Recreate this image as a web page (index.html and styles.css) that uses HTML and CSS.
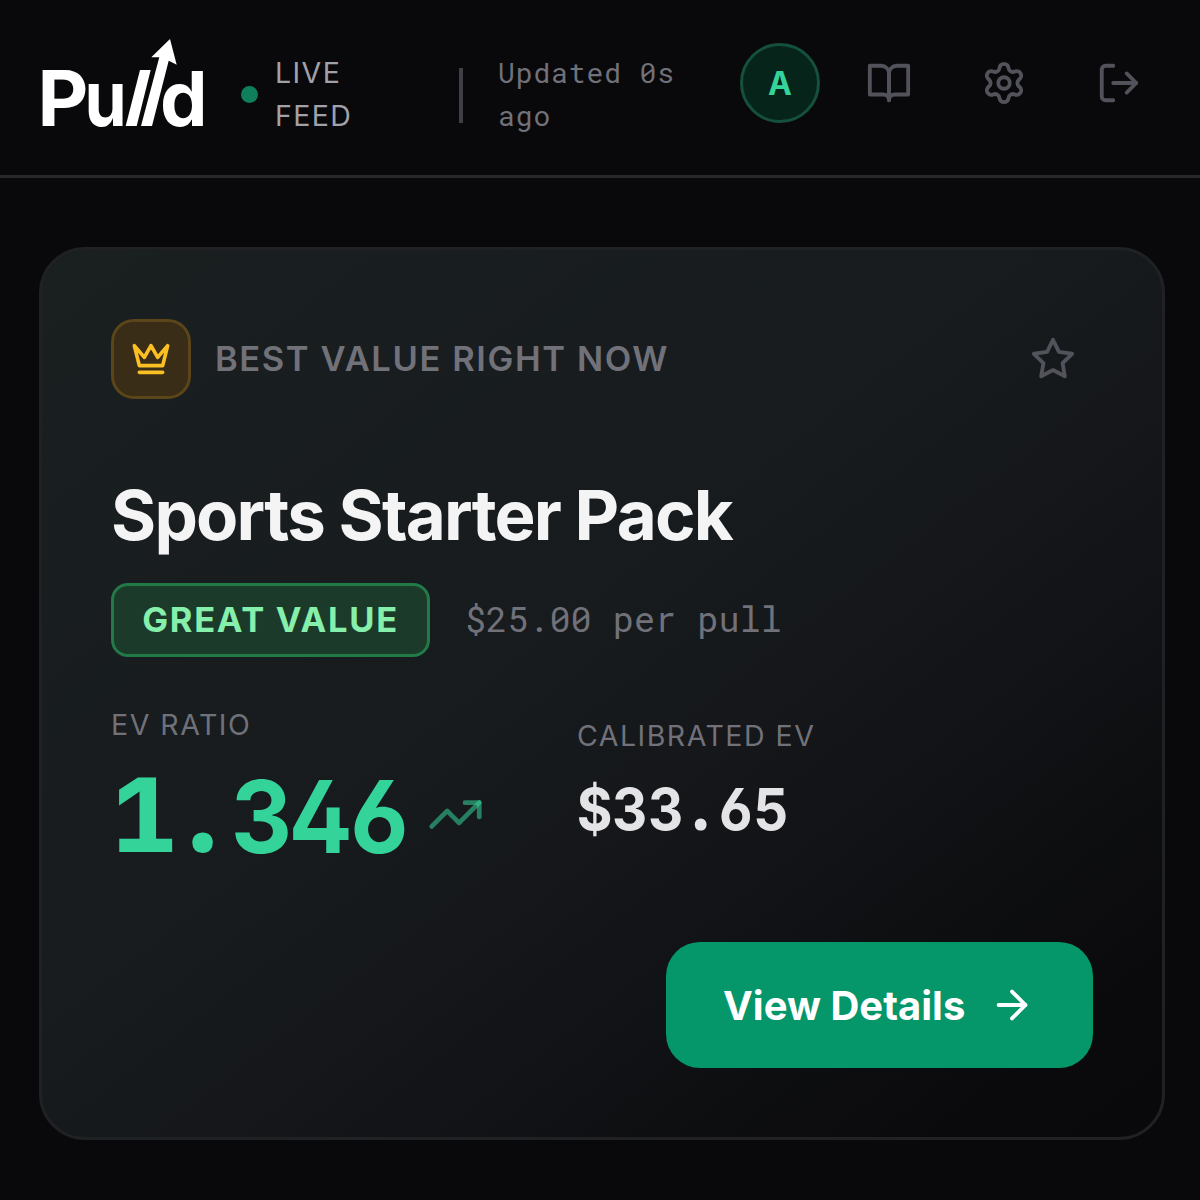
FILE: index.html
```html
<!DOCTYPE html>
<html lang="en">
<head>
<meta charset="utf-8">
<title>Pulld</title>
<link rel="stylesheet" href="styles.css">
</head>
<body>
<header class="topbar">
  <svg class="logo" viewBox="0 0 170 100" role="img" aria-label="Pulld">
    <text class="logo-text" transform="translate(-2.5 91) scale(1.02 1)">P</text>
    <text class="logo-text" transform="translate(44.6 91) scale(.88 1)">u</text>
    <text class="logo-text" transform="translate(120 91) scale(.98 .98)">d</text>
    <polygon points="100,35 110.7,35 96.7,91 85.7,91"/>
    <polygon points="130,4 136.7,29.7 128.7,25.7 112,91 101,91 119.3,22.3 111.3,22.3"/>
  </svg>
  <div class="live"><span class="dot"></span><span class="live-text">LIVE FEED</span></div>
  <div class="divider"></div>
  <div class="updated mono">Updated 0s ago</div>
  <div class="avatar">A</div>
  <nav class="nav">
    <svg class="icon" viewBox="0 0 24 24"><path d="M2 3h6a4 4 0 0 1 4 4v14a3 3 0 0 0-3-3H2z"/><path d="M22 3h-6a4 4 0 0 0-4 4v14a3 3 0 0 1 3-3h7z"/></svg>
    <svg class="icon" viewBox="0 0 24 24"><path d="M9.671 4.136a2.34 2.34 0 0 1 4.659 0 2.34 2.34 0 0 0 3.319 1.915 2.34 2.34 0 0 1 2.33 4.033 2.34 2.34 0 0 0 0 3.831 2.34 2.34 0 0 1-2.33 4.033 2.34 2.34 0 0 0-3.319 1.915 2.34 2.34 0 0 1-4.659 0 2.34 2.34 0 0 0-3.32-1.915 2.34 2.34 0 0 1-2.33-4.033 2.34 2.34 0 0 0 0-3.831A2.34 2.34 0 0 1 6.35 6.051a2.34 2.34 0 0 0 3.319-1.915"/><circle cx="12" cy="12" r="3"/></svg>
    <svg class="icon" viewBox="0 0 24 24"><path d="M9 21H5a2 2 0 0 1-2-2V5a2 2 0 0 1 2-2h4"/><path d="M16 17l5-5-5-5"/><path d="M21 12H9"/></svg>
  </nav>
</header>
<main class="card">
  <div class="card-head">
    <div class="crown"><svg class="crown-icon" viewBox="0 0 24 24"><path d="m2 4 3 12h14l3-12-6 7-4-7-4 7-6-7zm3 16h14"/></svg></div>
    <span class="eyebrow">BEST VALUE RIGHT NOW</span>
    <svg class="icon star" viewBox="0 0 24 24"><path d="m12 2 3.09 6.26L22 9.27l-5 4.87 1.18 6.88L12 17.77l-6.18 3.25L7 14.14 2 9.27l6.91-1.01z"/></svg>
  </div>
  <h1 class="title">Sports Starter Pack</h1>
  <div class="meta">
    <span class="badge">GREAT VALUE</span>
    <span class="price mono">$25.00 per pull</span>
  </div>
  <div class="stats">
    <section class="stat">
      <div class="label">EV RATIO</div>
      <div class="ratio-row">
        <span class="ratio digits"><span class="cell slab">1</span><span class="cell point">.</span><span class="cell">3</span><span class="cell">4</span><span class="cell">6</span></span>
        <svg class="trend" viewBox="0 0 24 24"><path d="M22 7l-8.5 8.5-5-5L2 17"/><path d="M16 7h6v6"/></svg>
      </div>
    </section>
    <section class="stat stat-ev">
      <div class="label">CALIBRATED EV</div>
      <div class="ev digits"><span class="cell">$</span><span class="cell">3</span><span class="cell">3</span><span class="cell point">.</span><span class="cell">6</span><span class="cell">5</span></div>
    </section>
  </div>
  <button class="cta" type="button">View Details<svg class="icon arrow" viewBox="0 0 24 24"><path d="M5 12h14"/><path d="m12 5 7 7-7 7"/></svg></button>
</main>
</body>
</html>
```

FILE: styles.css
```css
* { box-sizing: border-box; }
body { margin: 0; min-height: 1200px; background: #09090b; color: #f4f4f5; font-family: Inter, sans-serif; }
.mono { font-family: "Roboto Mono", "JetBrains Mono", "Liberation Mono", monospace; }
.topbar { display: flex; align-items: flex-start; height: 178px; padding-left: 40px; border-bottom: 3px solid #27272a; }
.logo { width: 170px; height: 100px; margin-top: 35px; fill: #fff; flex: none; overflow: visible; }
.logo-text { font: 650 77px Inter, sans-serif; }
.live { display: flex; align-items: center; gap: 17px; width: 218px; margin: 51px 0 0 31px; }
.dot { width: 17px; height: 17px; border-radius: 50%; background: #0f7f5b; flex: none; }
.live-text { width: 100px; color: #a1a1aa; font-size: 28.5px; line-height: 43px; letter-spacing: 1.4px; }
.divider { width: 4px; height: 55px; margin-top: 68px; background: #3f3f46; }
.updated { width: 200px; margin: 51px 0 0 35px; color: #71717a; font-size: 28px; line-height: 43px; letter-spacing: 0.9px; }
.avatar { width: 80px; height: 80px; margin: 43px 0 0 42px; border: 3px solid #14503c; border-radius: 50%; background: #07241b; color: #34d399; font-size: 32px; font-weight: 700; line-height: 75px; text-align: center; }
.nav { display: flex; gap: 69px; margin: 60px 0 0 46px; color: #52525b; }
.icon { display: block; width: 46px; height: 46px; flex: none; fill: none; stroke: currentColor; stroke-width: 2; stroke-linecap: round; stroke-linejoin: round; }
.card { display: flex; flex-direction: column; width: 1126px; height: 893px; margin: 69px 0 0 39px; padding: 69px; border: 3px solid #202124; border-radius: 46px; background: linear-gradient(142deg, #1a1f20 0%, #171b1e 45%, #15171a 58%, #0a0a0c 90%, #09090b 100%); }
.card-head { display: flex; align-items: center; height: 80px; }
.crown { display: grid; place-items: center; width: 80px; height: 80px; border: 3px solid #5b4519; border-radius: 23px; background: #392d18; }
.crown-icon { width: 40px; height: 40px; fill: none; stroke: #fbbf24; stroke-width: 2.2; stroke-linecap: round; stroke-linejoin: round; }
.eyebrow { margin: -2px 0 0 24px; color: #71717a; font-size: 34.5px; font-weight: 600; letter-spacing: 1.6px; }
.star { margin: 0 17px 0 auto; color: #52525b; }
.title { margin: 73px 0 0; font-size: 69px; line-height: 86px; font-weight: 700; letter-spacing: -1.8px; white-space: nowrap; }
.meta { display: flex; align-items: center; margin-top: 25px; height: 74px; }
.badge { width: 319px; height: 74px; border: 3px solid #227a46; border-radius: 17px; background: #1b3a2a; color: #86efac; font-size: 34.5px; font-weight: 700; line-height: 67px; letter-spacing: 1.7px; text-align: center; }
.price { margin: -3px 0 0 35px; color: #71717a; font-size: 35.2px; }
.stats { display: flex; align-items: flex-start; margin-top: 45px; }
.stat { width: 466px; }
.stat-ev { padding-top: 11px; }
.label { color: #71717a; font-size: 28.5px; line-height: 46px; letter-spacing: 1.5px; }
.digits { display: flex; font-family: Inter, sans-serif; font-weight: 700; font-feature-settings: "cv02", "cv03"; }
.cell { display: flex; justify-content: center; transform: scaleX(0.94); }
.slab { font-family: "JetBrains Mono", monospace; font-weight: 800; transform: scaleX(1.09); }
.point { font-family: "JetBrains Mono", monospace; font-weight: 800; transform: none; }
.ratio-row { display: flex; align-items: center; height: 136px; }
.ratio { width: 316px; padding-left: 3px; color: #34d399; font-size: 101px; line-height: 136px; }
.ratio .cell { width: 59px; }
.trend { width: 57px; height: 57px; margin-top: -3px; fill: none; stroke: rgba(52, 211, 153, 0.55); stroke-width: 2; stroke-linecap: round; stroke-linejoin: round; }
.ev { margin-top: 10px; color: #e4e4e7; font-size: 58px; line-height: 80px; }
.ev .cell { width: 35.3px; }
.cta { display: flex; align-items: center; align-self: flex-end; gap: 24px; width: 427px; height: 126px; margin-top: auto; padding: 0 0 0 57px; border: 0; border-radius: 34px; background: #059669; color: #fff; font: 650 40px Inter, sans-serif; }
```
